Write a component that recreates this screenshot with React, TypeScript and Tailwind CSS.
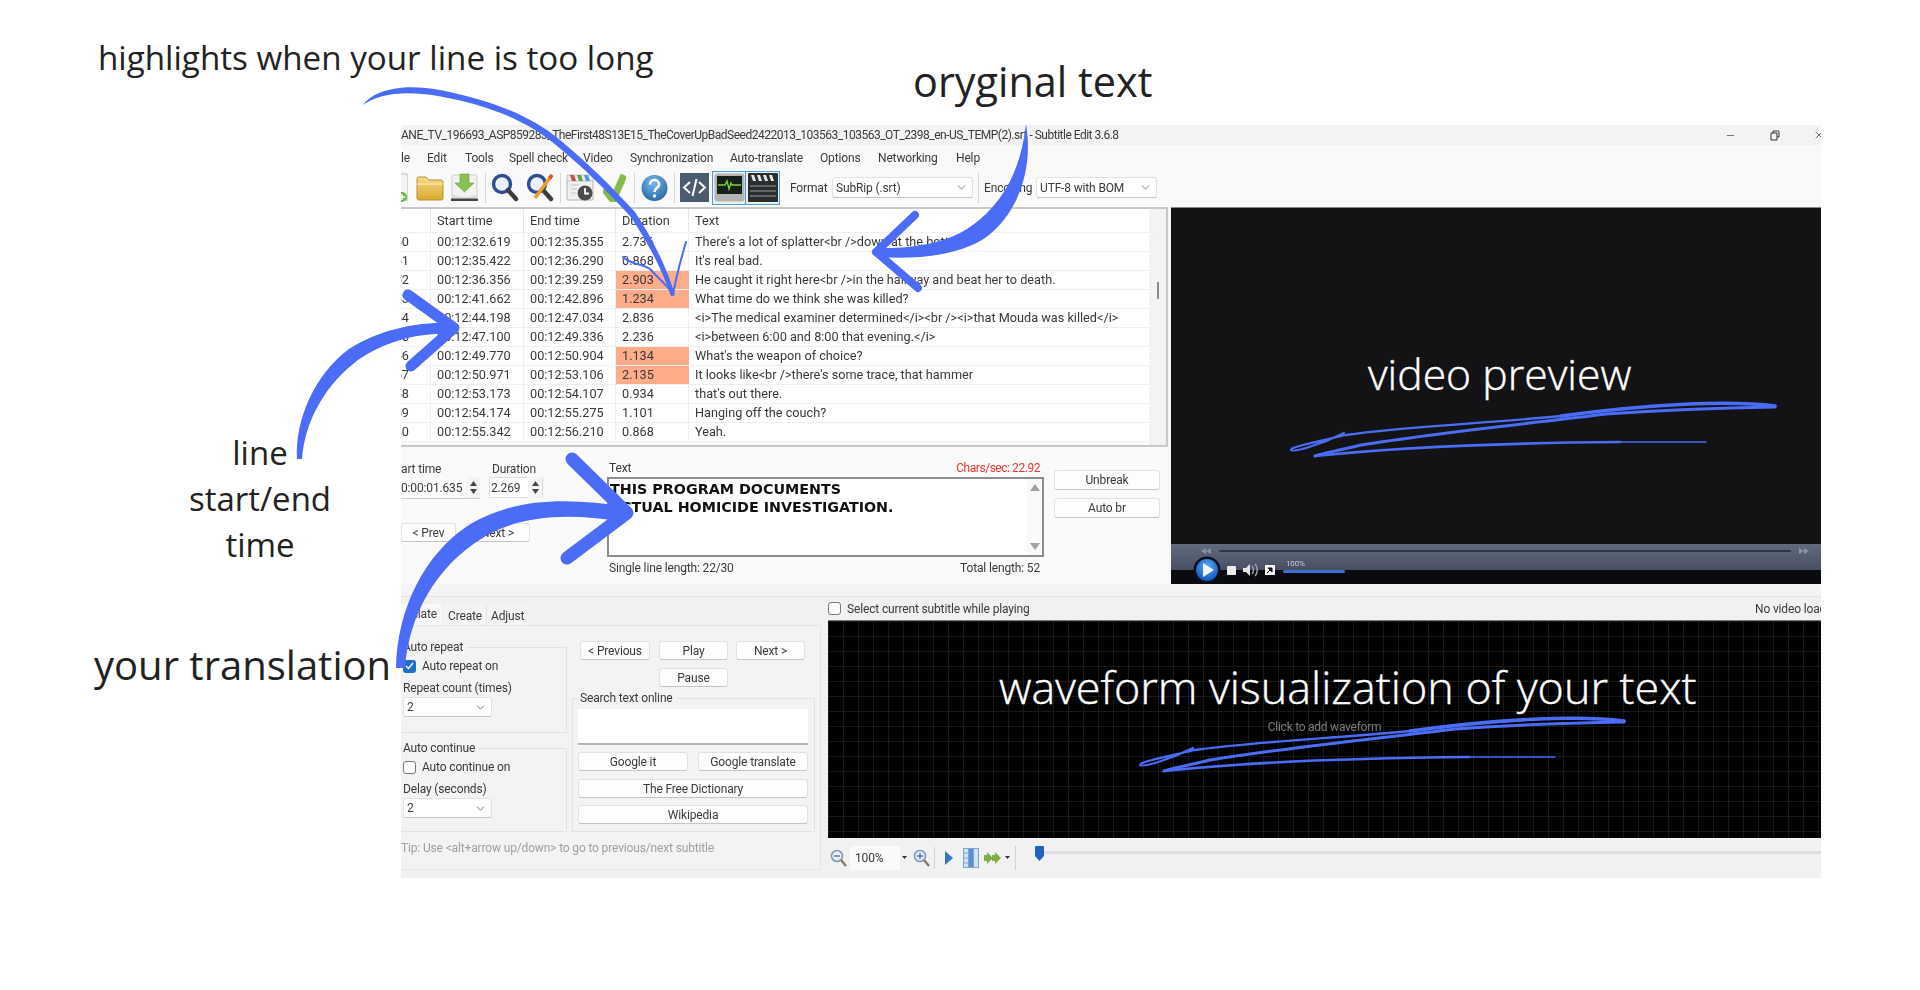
import React from "react";
import { ChevronDown, Minus, X } from "lucide-react";

const rows = [
  ["50", "00:12:32.619", "00:12:35.355", "2.736", "There's a lot of splatter<br />down at the bottom.", false],
  ["51", "00:12:35.422", "00:12:36.290", "0.868", "It's real bad.", false],
  ["52", "00:12:36.356", "00:12:39.259", "2.903", "He caught it right here<br />in the hallway and beat her to death.", true],
  ["53", "00:12:41.662", "00:12:42.896", "1.234", "What time do we think she was killed?", true],
  ["54", "00:12:44.198", "00:12:47.034", "2.836", "<i>The medical examiner determined</i><br /><i>that Mouda was killed</i>", false],
  ["55", "00:12:47.100", "00:12:49.336", "2.236", "<i>between 6:00 and 8:00 that evening.</i>", false],
  ["56", "00:12:49.770", "00:12:50.904", "1.134", "What's the weapon of choice?", true],
  ["57", "00:12:50.971", "00:12:53.106", "2.135", "It looks like<br />there's some trace, that hammer", true],
  ["58", "00:12:53.173", "00:12:54.107", "0.934", "that's out there.", false],
  ["59", "00:12:54.174", "00:12:55.275", "1.101", "Hanging off the couch?", false],
  ["60", "00:12:55.342", "00:12:56.210", "0.868", "Yeah.", false],
] as const;

function Btn({ className, children }: { className: string; children: React.ReactNode }) {
  return (
    <div className={"flex items-center justify-center rounded-[3px] border border-[#e2e2e2] border-b-[#c4c4c4] bg-[#fdfdfd] text-[#3a3a3a] " + className}>
      {children}
    </div>
  );
}

function Combo({ className, text }: { className: string; text: string }) {
  return (
    <div className={"flex items-center justify-between rounded-[3px] border border-[#e2e2e2] border-b-[#c4c4c4] bg-white pl-[3px] pr-[4px] text-[#3a3a3a] " + className}>
      <span>{text}</span>
      <ChevronDown size={13} strokeWidth={1.4} className="text-[#555]" />
    </div>
  );
}

function Spin() {
  return (
    <div className="flex h-[21px] w-[14px] flex-col items-center justify-center gap-[3px] bg-[#f4f4f4]">
      <svg width="7" height="5" viewBox="0 0 7 5"><path d="M3.5 0 7 5H0z" fill="#444" /></svg>
      <svg width="7" height="5" viewBox="0 0 7 5"><path d="M0 0h7L3.5 5z" fill="#444" /></svg>
    </div>
  );
}

function Sep({ className }: { className: string }) {
  return <div className={"h-[30px] w-px bg-[#d8d8d8] " + className} />;
}

function Mag({ pencil }: { pencil?: boolean }) {
  return (
    <svg width="28" height="29" viewBox="0 0 28 29">
      <circle cx="11" cy="11" r="8.5" fill="#eaf1fb" stroke="#2f4d8f" strokeWidth="3.4" />
      <path d="M17 17l8 9" stroke="#3d3d3d" strokeWidth="4.4" strokeLinecap="round" />
      {pencil && <path d="M26 2 9 25" stroke="#f09a2a" strokeWidth="3.6" />}
      {pencil && <path d="M26 2l-2.5 3.4" stroke="#d84f3f" strokeWidth="3.6" />}
    </svg>
  );
}

function ToolIcons() {
  return (
    <div className="flex items-center">
      <svg width="7" height="29" viewBox="0 0 7 29" className="shrink-0">
        <path d="M-8 1h13a2 2 0 0 1 2 2v24H-8z" fill="#f4f4f4" stroke="#bbb" />
        <circle cx="1" cy="24" r="5" fill="#5fbf43" />
        <path d="M1 21v6M-2 24h6" stroke="#fff" strokeWidth="1.5" />
      </svg>
      <svg width="28" height="26" viewBox="0 0 28 26" className="ml-[8px]">
        <defs>
          <linearGradient id="folderFill" x1="0" y1="0" x2="0" y2="1">
            <stop offset="0" stopColor="#f4dc8c" />
            <stop offset="1" stopColor="#d9a92c" />
          </linearGradient>
        </defs>
        <path d="M1 4a2 2 0 0 1 2-2h7l3 3h12a2 2 0 0 1 2 2v16a2 2 0 0 1-2 2H3a2 2 0 0 1-2-2z" fill="url(#folderFill)" stroke="#b98f2c" />
        <path d="M1 9h26" stroke="#fbeeb8" />
      </svg>
      <svg width="27" height="29" viewBox="0 0 27 29" className="ml-[7px]">
        <rect x="1" y="2" width="25" height="24" rx="2" fill="#f2f2f2" stroke="#cfcfcf" />
        <path d="M9 1h9v9h5L13.5 19 4 10h5z" fill="#8cc152" stroke="#5f9e2f" strokeWidth=".6" />
        <path d="M1 21c6 4 19 4 25 0v5H1z" fill="#ddd" />
        <rect x="0" y="25.5" width="27" height="2.500" fill="#444" />
      </svg>
      <Sep className="ml-[7px]" />
      <div className="ml-[5px] flex"><Mag /></div>
      <div className="ml-[7px] flex"><Mag pencil /></div>
      <Sep className="ml-[6px]" />
      <svg width="28" height="29" viewBox="0 0 28 29" className="ml-[5px]">
        <rect x="1" y="7" width="26" height="20" rx="1" fill="#efefef" stroke="#b5b5b5" />
        <path d="M1 2h26v6H1z" fill="#eee" stroke="#aaa" strokeWidth=".6" />
        <path d="M4 2h4l2 6H6z" fill="#d8473f" />
        <path d="M11 2h4l2 6h-4z" fill="#5aa34a" />
        <path d="M18 2h4l2 6h-4z" fill="#4f9ad8" />
        <path d="M5 12h8M5 16h6M5 20h5" stroke="#c4c4c4" />
        <circle cx="19" cy="20" r="7.5" fill="#4b4b4b" />
        <path d="M19 15v5.500h4" stroke="#fff" strokeWidth="1.800" fill="none" />
      </svg>
      <svg width="23" height="29" viewBox="0 0 23 29" className="ml-[9px]">
        <path d="M1 16l9 11L21 2" stroke="#86bb4a" strokeWidth="7" fill="none" strokeLinejoin="round" />
      </svg>
      <Sep className="ml-[8px]" />
      <svg width="27" height="28" viewBox="0 0 27 28" className="ml-[6px]">
        <defs>
          <radialGradient id="helpFill" cx=".45" cy=".3" r=".8">
            <stop offset="0" stopColor="#7cb7ea" />
            <stop offset="1" stopColor="#1d5f9e" />
          </radialGradient>
        </defs>
        <circle cx="13.5" cy="14" r="13" fill="url(#helpFill)" />
        <path d="M9 10.500c0-6 9-6 9 0 0 3.500-4.500 3.500-4.500 7.500" stroke="#fff" strokeWidth="2.600" fill="none" />
        <circle cx="13.500" cy="22" r="1.700" fill="#fff" />
      </svg>
      <Sep className="ml-[6px]" />
      <svg width="29" height="29" viewBox="0 0 29 29" className="ml-[5px]">
        <rect width="29" height="29" fill="#4b5b70" />
        <path d="M10 9l-6 5.500 6 5.500M19 9l6 5.500-6 5.500M16.500 6l-4 17" stroke="#fff" strokeWidth="2" fill="none" />
      </svg>
      <div className="ml-[3px] flex h-[34px] w-[34px] items-center justify-center border border-[#4f9bd6] bg-[#e8f1fa]">
        <svg width="31" height="29" viewBox="0 0 31 29">
          <rect x=".5" y=".5" width="30" height="28" rx="3" fill="#b4b4b4" />
          <rect x="3" y="3" width="25" height="18" fill="#15201a" />
          <path d="M4 12h7l2-4 2 8 2-6 1 2h9" stroke="#7fd23b" strokeWidth="1.400" fill="none" />
        </svg>
      </div>
      <div className="flex h-[34px] w-[34px] items-center justify-center border border-[#4f9bd6] border-l-0 bg-[#e8f1fa]">
        <svg width="30" height="29" viewBox="0 0 30 29">
          <rect width="30" height="29" rx="1" fill="#2b2e31" />
          <path d="M3 2h3l2 6H5zM9 2h3l2 6h-3zM15 2h3l2 6h-3zM21 2h3l2 6h-3z" fill="#e8e8e8" />
          <path d="M2 13h26M2 18h26M2 23h26" stroke="#9c9c9c" strokeWidth="1" />
        </svg>
      </div>
    </div>
  );
}

function Table() {
  return (
    <div className="flex h-[240px] flex-col border-b-2 border-t-2 border-r-2 border-[#c9c9c9] bg-white font-['Roboto',sans-serif] text-[12.7px] tracking-normal text-[#383838]">
      <div className="flex h-[24px] shrink-0 border-b border-[#f0f0f0] text-[#3a3a3a]">
        <div className="w-[30px] border-r border-[#e6e6e6]" />
        <div className="w-[93px] border-r border-[#e6e6e6] pl-[6px] leading-[23px]">Start time</div>
        <div className="w-[92px] border-r border-[#e6e6e6] pl-[6px] leading-[23px]">End time</div>
        <div className="w-[73px] border-r border-[#e6e6e6] pl-[6px] leading-[23px]">Duration</div>
        <div className="flex-1 pl-[6px] leading-[23px]">Text</div>
        <div className="w-[17px] bg-[#f3f3f3]" />
      </div>
      <div className="relative flex min-h-0 flex-1">
        <div className="flex-1">
          {rows.map((r) => (
            <div key={r[0]} className="flex h-[19px] border-b border-[#efefef] leading-[18px]">
              <div className="flex w-[30px] justify-end overflow-hidden border-r border-[#efefef] pr-[21px]"><span>{r[0]}</span></div>
              <div className="w-[93px] border-r border-[#efefef] pl-[6px]">{r[1]}</div>
              <div className="w-[92px] border-r border-[#efefef] pl-[6px]">{r[2]}</div>
              <div className={r[5] ? "w-[73px] bg-[#ffac8a] pl-[6px]" : "w-[73px] border-r border-[#efefef] pl-[6px]"}>{r[3]}</div>
              <div className="flex-1 truncate pl-[6px]">{r[4]}</div>
            </div>
          ))}
        </div>
        <div className="flex w-[17px] justify-center bg-[#f3f3f3] pt-[49px]">
          <div className="h-[17px] w-[2px] bg-[#8b8b8b]" />
        </div>
      </div>
    </div>
  );
}

function EditArea() {
  return (
    <div className="flex h-[137px] bg-[#fafafa] text-[#3a3a3a]">
      <div className="w-[206px] pt-[14px]">
        <div className="flex h-[16px] leading-[16px]">
          <span className="w-[91px]">art time</span>
          <span>Duration</span>
        </div>
        <div className="flex h-[21px]">
          <div className="flex w-[79px] items-center justify-between bg-[#fbfbfb] shadow-[0_1px_0_#ccc]"><span>0:00:01.635</span><Spin /></div>
          <div className="ml-[9px] flex w-[54px] items-center justify-between border border-[#ddd] bg-white pl-[1px]"><span>2.269</span><Spin /></div>
        </div>
        <div className="mt-[25px] flex">
          <Btn className="h-[19px] w-[55px]">&lt; Prev</Btn>
          <Btn className="ml-[9px] h-[19px] w-[65px]">Next &gt;</Btn>
        </div>
      </div>
      <div className="w-[437px]">
        <div className="flex h-[18px] justify-between pl-[2px] pr-[4px] pt-[14px] leading-[16px]">
          <span className="-mt-[1px]">Text</span>
          <span className="-mt-[1px] tracking-[-0.45px] text-[#e43a2e]">Chars/sec: 22.92</span>
        </div>
        <div className="mt-[12px] flex h-[80px] justify-between border-2 border-[#8d8d8d] bg-white">
          <div className="pl-[1px] pt-[1px] font-['DejaVu_Sans',sans-serif] text-[14.3px] font-bold leading-[18px] tracking-normal text-[#111]">
            <div>THIS PROGRAM DOCUMENTS</div>
            <div>ACTUAL HOMICIDE INVESTIGATION.</div>
          </div>
          <div className="flex w-[15px] flex-col items-center justify-between bg-[#fafafa] py-[5px]">
            <svg width="10" height="7" viewBox="0 0 10 7"><path d="M5 0l5 7H0z" fill="#a0a0a0" /></svg>
            <svg width="10" height="7" viewBox="0 0 10 7"><path d="M0 0h10L5 7z" fill="#a0a0a0" /></svg>
          </div>
        </div>
        <div className="mt-[3px] flex justify-between pl-[2px] pr-[4px] leading-[16px]">
          <span>Single line length: 22/30</span>
          <span>Total length: 52</span>
        </div>
      </div>
      <div className="ml-[10px] pt-[23px]">
        <Btn className="h-[20px] w-[106px]">Unbreak</Btn>
        <Btn className="mt-[8px] h-[20px] w-[106px]">Auto br</Btn>
      </div>
    </div>
  );
}

function Video() {
  return (
    <div className="flex h-[377px] w-[650px] flex-col border-t border-[#888] bg-[#131315]">
      <div className="flex-1" />
      <div className="h-[40px] shrink-0 bg-[linear-gradient(#626a7e_0%,#484f62_65%,#0a0b0e_65%,#0a0b0e_100%)]">
        <div className="flex h-[12px] items-center pl-[30px] pr-[12px] pt-[2px] text-[#8d93a3]">
          <svg width="10" height="6" viewBox="0 0 10 6"><path d="M5 0v6L0 3zM10 0v6L5 3z" fill="currentColor" /></svg>
          <div className="mx-[8px] h-[2px] flex-1 rounded-full bg-[#30364a]" />
          <svg width="10" height="6" viewBox="0 0 10 6"><path d="M0 0v6l5-3zM5 0v6l5-3z" fill="currentColor" /></svg>
        </div>
        <div className="flex items-center pl-[22px]">
          <svg width="28" height="28" viewBox="0 0 28 28" className="shrink-0">
            <defs>
              <radialGradient id="playFill" cx=".5" cy=".35" r=".7">
                <stop offset="0" stopColor="#58aefb" />
                <stop offset="1" stopColor="#0d4cb5" />
              </radialGradient>
            </defs>
            <circle cx="14" cy="14" r="13.5" fill="#0a1020" />
            <circle cx="14" cy="14" r="11" fill="url(#playFill)" />
            <path d="M10 7l11 7-11 7z" fill="#f4f8ff" />
          </svg>
          <div className="ml-[6px] h-[9px] w-[9px] rounded-[1px] bg-[#ececec]" />
          <svg width="16" height="14" viewBox="0 0 16 14" className="ml-[7px]">
            <path d="M0 5h3l4-4v12L3 9H0z" fill="#e6e6e6" />
            <path d="M9 3c2 2 2 6 0 8M12 1c3 3 3 9 0 12" stroke="#9aa0ae" strokeWidth="1.500" fill="none" />
          </svg>
          <svg width="10" height="10" viewBox="0 0 10 10" className="ml-[6px]">
            <rect width="10" height="10" fill="#f2f2f2" />
            <path d="M2 8l4-4M3 3h4v4z" stroke="#111" fill="#111" />
          </svg>
          <div className="-mt-[9px] ml-[8px] flex w-[62px] flex-col">
            <span className="ml-[3px] text-[8px] leading-[10px] text-[#c8ccd6]">100%</span>
            <div className="mt-[1px] h-[3px] w-[62px] rounded-full bg-[#3d6fd8]" />
          </div>
        </div>
      </div>
    </div>
  );
}

function BottomLeft() {
  return (
    <div className="flex w-[420px] flex-col pt-[7px] text-[#3a3a3a]">
      <div className="flex h-[21px] shrink-0">
        <div className="flex h-[21px] w-[41px] justify-end bg-[#f9f9f9] pr-[5px] leading-[20px]">slate</div>
        <div className="ml-[2px] w-[43px] border-r border-[#e4e4e4] bg-[#f4f4f4] pl-[4px] leading-[24px]">Create</div>
        <div className="w-[41px] bg-[#f4f4f4] pl-[4px] leading-[24px]">Adjust</div>
      </div>
      <div className="flex h-[245px] flex-col border border-l-0 border-[#e4e4e4] bg-[#f3f3f3]">
        <div className="flex h-[207px] shrink-0 pt-[13px]">
          <div className="w-[166px]">
            <fieldset className="h-[94px] border border-l-0 border-[#e2e2e2] pl-[2px]">
              <legend className="h-[16px] pr-[4px] leading-[16px]">Auto repeat</legend>
              <div className="mt-[3px] flex h-[16px] items-center">
                <div className="flex h-[13px] w-[13px] items-center justify-center rounded-[3px] bg-[#1f6fc4]">
                  <svg width="9" height="8" viewBox="0 0 9 8"><path d="M1 4l2.500 2.500L8 1" stroke="#fff" strokeWidth="1.300" fill="none" /></svg>
                </div>
                <span className="ml-[6px]">Auto repeat on</span>
              </div>
              <div className="mt-[6px] leading-[16px]">Repeat count (times)</div>
              <Combo className="mt-[1px] h-[20px] w-[89px]" text="2" />
            </fieldset>
            <fieldset className="mt-[7px] h-[92px] border border-l-0 border-[#e2e2e2] pl-[2px]">
              <legend className="h-[16px] pr-[4px] leading-[16px]">Auto continue</legend>
              <div className="mt-[3px] flex h-[16px] items-center">
                <div className="h-[13px] w-[13px] rounded-[3px] border border-[#777] bg-white" />
                <span className="ml-[6px]">Auto continue on</span>
              </div>
              <div className="mt-[6px] leading-[16px]">Delay (seconds)</div>
              <Combo className="mt-[1px] h-[20px] w-[89px]" text="2" />
            </fieldset>
          </div>
          <div className="ml-[5px] w-[243px]">
            <div className="flex gap-[9px] pl-[8px] pt-[2px]">
              <Btn className="h-[19px] w-[70px]">&lt; Previous</Btn>
              <Btn className="h-[19px] w-[69px]">Play</Btn>
              <Btn className="-ml-[1px] h-[19px] w-[69px]">Next &gt;</Btn>
            </div>
            <Btn className="ml-[87px] mt-[8px] h-[19px] w-[69px]">Pause</Btn>
            <fieldset className="mt-[3px] h-[142px] border border-[#e2e2e2] px-[5px]">
              <legend className="ml-[2px] h-[16px] pr-[4px] leading-[16px]">Search text online</legend>
              <div className="mt-[3px] h-[36px] w-[230px] border-b-2 border-[#b4b4b4] bg-white" />
              <div className="mt-[7px] flex gap-[10px]">
                <Btn className="h-[19px] w-[110px]">Google it</Btn>
                <Btn className="h-[19px] w-[110px]">Google translate</Btn>
              </div>
              <Btn className="mt-[8px] h-[19px] w-[230px]">The Free Dictionary</Btn>
              <Btn className="mt-[7px] h-[19px] w-[230px]">Wikipedia</Btn>
            </fieldset>
          </div>
        </div>
        <div className="mt-[7px] leading-[16px] text-[#a0a0a0]">Tip: Use &lt;alt+arrow up/down&gt; to go to previous/next subtitle</div>
      </div>
    </div>
  );
}

function BottomRight() {
  return (
    <div className="ml-[7px] flex w-[993px] flex-col text-[#3a3a3a]">
      <div className="flex h-[23px] shrink-0 items-center justify-between">
        <div className="flex items-center">
          <div className="h-[13px] w-[13px] rounded-[3px] border border-[#777] bg-white" />
          <span className="ml-[6px]">Select current subtitle while playing</span>
        </div>
        <span className="w-[66px] overflow-hidden whitespace-nowrap">No video loaded</span>
      </div>
      <div className="flex h-[218px] shrink-0 flex-col items-center justify-center border-t border-[#777] bg-black bg-[linear-gradient(#181818_1px,transparent_1px),linear-gradient(90deg,#181818_1px,transparent_1px)] bg-[size:15px_15px] text-[#7b7b7b]">
        <span className="mb-[5px] text-[12px] tracking-[-0.25px]">Click to add waveform</span>
      </div>
      <div className="flex h-[39px] items-center">
        <svg width="18" height="18" viewBox="0 0 18 18" className="ml-[2px]">
          <circle cx="7" cy="7" r="5.500" fill="#e6eefa" stroke="#7f96b8" strokeWidth="1.600" />
          <path d="M4 7h6" stroke="#4f75ad" strokeWidth="1.400" />
          <path d="M11 11l5 6" stroke="#8a7a5d" strokeWidth="2.400" />
        </svg>
        <div className="ml-[2px] flex h-[24px] w-[50px] items-center bg-[#fafafa] pl-[5px]">100%</div>
        <svg width="5" height="3" viewBox="0 0 5 3" className="ml-[2px]"><path d="M0 0h5L2.500 3z" fill="#333" /></svg>
        <svg width="18" height="18" viewBox="0 0 18 18" className="ml-[6px]">
          <circle cx="7" cy="7" r="5.500" fill="#e6eefa" stroke="#7f96b8" strokeWidth="1.600" />
          <path d="M4 7h6M7 4v6" stroke="#4f75ad" strokeWidth="1.400" />
          <path d="M11 11l5 6" stroke="#8a7a5d" strokeWidth="2.400" />
        </svg>
        <div className="ml-[3px] h-[22px] w-px bg-[#d2d2d2]" />
        <svg width="8" height="14" viewBox="0 0 8 14" className="ml-[10px]"><path d="M0 0l8 7-8 7z" fill="#3474c9" /></svg>
        <svg width="16" height="20" viewBox="0 0 16 20" className="ml-[10px]">
          <rect x=".5" y=".5" width="15" height="19" fill="#cfe2f7" stroke="#7fa3cf" />
          <path d="M5.500 0v20M10.500 0v20M0 5h5M0 10h5M0 15h5" stroke="#7fa3cf" />
          <rect x="6" y="1" width="4" height="18" fill="#5c8fd0" />
        </svg>
        <svg width="18" height="12" viewBox="0 0 18 12" className="ml-[5px]"><path d="M0 3h3V0l6 6-6 6V9H0zM8 3h3V0l6 6-6 6V9H8z" fill="#7fae4a" /></svg>
        <svg width="5" height="3" viewBox="0 0 5 3" className="ml-[3px]"><path d="M0 0h5L2.500 3z" fill="#333" /></svg>
        <div className="ml-[5px] h-[24px] w-px bg-[#d2d2d2]" />
        <div className="ml-[19px] flex flex-1 -translate-y-[4px] items-center">
          <svg width="9" height="15" viewBox="0 0 9 15" className="shrink-0"><path d="M1 0h7a1 1 0 0 1 1 1v9l-4.500 5L0 10V1a1 1 0 0 1 1-1z" fill="#1f63c0" /></svg>
          <div className="-translate-y-[1px] h-[3px] flex-1 bg-[#dedede]" />
        </div>
      </div>
    </div>
  );
}

function Scribble() {
  return (
    <g fill="none" stroke="#4a6cf7" strokeLinecap="round">
      <path strokeWidth="3.600" d="M1775 406C1730 400 1650 404 1561 416" />
      <path strokeWidth="2.400" d="M1561 416C1490 423 1400 427 1346 435" />
      <path strokeWidth="2.200" d="M1346 435C1320 441 1290 447 1291 450C1293 453 1322 444 1344 433" />
      <path strokeWidth="3" d="M1775 407C1720 408 1650 411 1606 414C1560 420 1440 432 1361 445C1340 450 1320 454 1315 456" />
      <path strokeWidth="2.600" d="M1315 456C1400 447 1500 443 1620 442" />
      <path strokeWidth="1.400" d="M1620 442L1706 442" />
    </g>
  );
}

function Overlay() {
  return (
    <svg viewBox="0 0 1920 990" width="1920" height="990" className="pointer-events-none absolute left-0 top-0">
      <g fill="#4a6cf7">
        <path d="M1026 124C1034 170 1017 217 982 240C950 258 910 259 876 257L877 248C910 249 945 244 970 227C1003 204 1021 170 1026 124Z" />
        <path d="M363 105C374 90 402 83 440 90C490 100 530 115 560 140C590 165 610 185 635 212C650 235 665 262 675 295L671 296C660 264 645 238 630 216C606 190 586 170 556 145C526 120 488 105 438 96C404 90 378 94 363 105Z" />
        <path d="M297 459C295 420 314 375 349 349C380 329 420 321 455 323L453 334C420 332 385 341 358 360C326 384 305 420 302 459Z" />
        <path d="M396 668C397 610 424 554 469 525C515 497 570 498 627 507L625 522C570 513 520 514 481 539C436 567 409 615 405 668Z" />
      </g>
      <g fill="none" stroke="#4a6cf7" strokeLinecap="round" strokeLinejoin="round">
        <path strokeWidth="8" d="M915 215L876 252L918 288" />
        <path strokeWidth="11" d="M408 295L454 328L411 366" />
        <path strokeWidth="13" d="M572 459L627 513L567 558" />
        <path strokeWidth="2" d="M686 242C680 262 676 278 673 295" />
        <path strokeWidth="2" d="M623 257C632 266 645 263 651 270C660 280 668 286 673 294" />
      </g>
      <Scribble />
      <g transform="translate(-151 315)">
        <Scribble />
      </g>
    </svg>
  );
}

function Annotations() {
  return (
    <div className="pointer-events-none font-['Open_Sans',sans-serif]">
      <div className="absolute left-[98px] top-[36px] text-[33.2px] leading-[44px] text-[#222]">highlights when your line is too long</div>
      <div className="absolute left-[913px] top-[52px] text-[41.4px] leading-[58px] text-[#222]">oryginal text</div>
      <div className="absolute left-[160px] top-[430px] w-[200px] text-center text-[33px] leading-[46px] text-[#222]">line<br />start/end<br />time</div>
      <div className="absolute left-[94px] top-[637px] text-[40px] leading-[56px] text-[#222]">your translation</div>
      <div className="absolute left-[1368px] top-[346px] text-[42.7px] font-light leading-[56px] text-white [-webkit-text-stroke:0.4px_white]">video preview</div>
      <div className="absolute left-[999px] top-[659px] text-[44.9px] font-light leading-[56px] text-white [-webkit-text-stroke:0.4px_white]">waveform visualization of your text</div>
    </div>
  );
}

export default function App() {
  return (
    <div className="relative h-[990px] w-[1920px] overflow-hidden bg-white font-['Open_Sans',sans-serif]">
      <div className="pl-[401px] pt-[125px]">
        <div className="flex h-[753px] w-[1420px] flex-col overflow-hidden bg-[#f1f1f1] font-['Roboto',sans-serif] text-[12px] tracking-[-0.15px] text-[#3a3a3a] blur-[0.4px]">
          <div className="flex h-[20px] shrink-0 items-center justify-between bg-[#f3f3f3]">
            <span className="whitespace-nowrap tracking-[-0.5px]">ANE_TV_196693_ASP859283_TheFirst48S13E15_TheCoverUpBadSeed2422013_103563_103563_OT_2398_en-US_TEMP(2).srt - Subtitle Edit 3.6.8</span>
            <div className="flex items-center">
              <Minus size={11} strokeWidth={1.4} className="text-[#333]" />
              <svg width="11" height="11" viewBox="0 0 11 11" className="ml-[33px]"><path d="M2 3h6v7H2zM4 3V1h5a1 1 0 0 1 1 1v5H8" fill="none" stroke="#333" /></svg>
              <X size={12} strokeWidth={1.4} className="-mr-[4px] ml-[33px] text-[#333]" />
            </div>
          </div>
          <div className="flex h-[25px] shrink-0 items-center bg-[#f9f9f9]">
            <span className="w-[26px]">le</span>
            <span className="w-[38px]">Edit</span>
            <span className="w-[44px]">Tools</span>
            <span className="w-[74px]">Spell check</span>
            <span className="w-[47px]">Video</span>
            <span className="w-[100px]">Synchronization</span>
            <span className="w-[90px]">Auto-translate</span>
            <span className="w-[58px]">Options</span>
            <span className="w-[78px]">Networking</span>
            <span>Help</span>
          </div>
          <div className="flex h-[37px] shrink-0 items-center bg-[#f9f9f9] pb-[2px]">
            <ToolIcons />
            <span className="ml-[10px] w-[42px]">Format</span>
            <Combo className="h-[21px] w-[141px]" text="SubRip (.srt)" />
            <Sep className="ml-[5px]" />
            <span className="ml-[5px] w-[52px]">Encoding</span>
            <Combo className="h-[21px] w-[121px]" text="UTF-8 with BOM" />
          </div>
          <div className="flex h-[377px] shrink-0 bg-[#f7f7f7]">
            <div className="w-[767px]">
              <Table />
              <EditArea />
            </div>
            <div className="ml-[3px]">
              <Video />
            </div>
          </div>
          <div className="h-[13px] shrink-0 border-b border-[#e3e3e3] bg-[#f4f4f4]" />
          <div className="flex min-h-0 flex-1">
            <BottomLeft />
            <BottomRight />
          </div>
        </div>
      </div>
      <Overlay />
      <Annotations />
    </div>
  );
}
